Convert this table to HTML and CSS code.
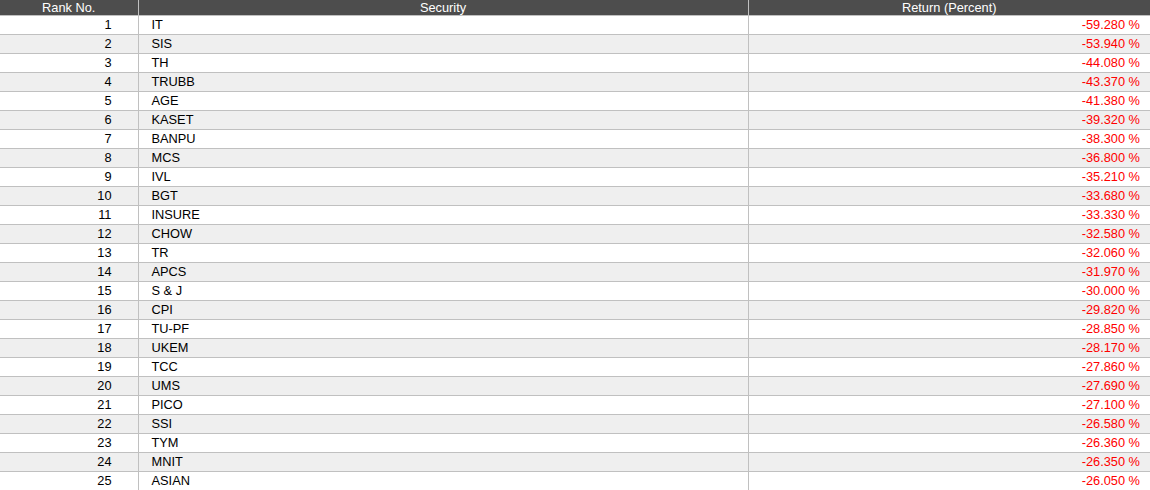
FILE: index.html
```html
<!DOCTYPE html>
<html>
<head>
<meta charset="utf-8">
<link rel="stylesheet" href="styles.css">
</head>
<body>
<table class="rank-table">
<colgroup><col class="c-rank"><col class="c-sec"><col class="c-ret"></colgroup>
<thead>
<tr><th>Rank No.</th><th>Security</th><th>Return (Percent)</th></tr>
</thead>
<tbody>
<tr><td class="rank">1</td><td class="sec">IT</td><td class="ret">-59.280 %</td></tr>
<tr><td class="rank">2</td><td class="sec">SIS</td><td class="ret">-53.940 %</td></tr>
<tr><td class="rank">3</td><td class="sec">TH</td><td class="ret">-44.080 %</td></tr>
<tr><td class="rank">4</td><td class="sec">TRUBB</td><td class="ret">-43.370 %</td></tr>
<tr><td class="rank">5</td><td class="sec">AGE</td><td class="ret">-41.380 %</td></tr>
<tr><td class="rank">6</td><td class="sec">KASET</td><td class="ret">-39.320 %</td></tr>
<tr><td class="rank">7</td><td class="sec">BANPU</td><td class="ret">-38.300 %</td></tr>
<tr><td class="rank">8</td><td class="sec">MCS</td><td class="ret">-36.800 %</td></tr>
<tr><td class="rank">9</td><td class="sec">IVL</td><td class="ret">-35.210 %</td></tr>
<tr><td class="rank">10</td><td class="sec">BGT</td><td class="ret">-33.680 %</td></tr>
<tr><td class="rank">11</td><td class="sec">INSURE</td><td class="ret">-33.330 %</td></tr>
<tr><td class="rank">12</td><td class="sec">CHOW</td><td class="ret">-32.580 %</td></tr>
<tr><td class="rank">13</td><td class="sec">TR</td><td class="ret">-32.060 %</td></tr>
<tr><td class="rank">14</td><td class="sec">APCS</td><td class="ret">-31.970 %</td></tr>
<tr><td class="rank">15</td><td class="sec">S &amp; J</td><td class="ret">-30.000 %</td></tr>
<tr><td class="rank">16</td><td class="sec">CPI</td><td class="ret">-29.820 %</td></tr>
<tr><td class="rank">17</td><td class="sec">TU-PF</td><td class="ret">-28.850 %</td></tr>
<tr><td class="rank">18</td><td class="sec">UKEM</td><td class="ret">-28.170 %</td></tr>
<tr><td class="rank">19</td><td class="sec">TCC</td><td class="ret">-27.860 %</td></tr>
<tr><td class="rank">20</td><td class="sec">UMS</td><td class="ret">-27.690 %</td></tr>
<tr><td class="rank">21</td><td class="sec">PICO</td><td class="ret">-27.100 %</td></tr>
<tr><td class="rank">22</td><td class="sec">SSI</td><td class="ret">-26.580 %</td></tr>
<tr><td class="rank">23</td><td class="sec">TYM</td><td class="ret">-26.360 %</td></tr>
<tr><td class="rank">24</td><td class="sec">MNIT</td><td class="ret">-26.350 %</td></tr>
<tr><td class="rank">25</td><td class="sec">ASIAN</td><td class="ret">-26.050 %</td></tr>
</tbody>
</table>
</body>
</html>
```

FILE: styles.css
```css
html, body {
  margin: 0;
  padding: 0;
  background: #ffffff;
}
body {
  font-family: "Liberation Sans", Arial, sans-serif;
  font-size: 12.8px;
  color: #000000;
}
.rank-table {
  width: 1150px;
  border-collapse: collapse;
  table-layout: fixed;
}
.c-rank { width: 138px; }
.c-sec { width: 610px; }
.c-ret { width: 402px; }
.rank-table th {
  background: #4d4d4d;
  color: #ffffff;
  font-weight: normal;
  font-size: 12.8px;
  height: 15px;
  line-height: 15px;
  padding: 0;
  text-align: center;
  border-left: 1px solid #c0c0c0;
  border-bottom: 1px solid #c0c0c0;
}
.rank-table th:first-child { border-left: none; }
.rank-table td {
  height: 18px;
  line-height: 18px;
  padding: 0;
  border-left: 1px solid #c0c0c0;
  border-bottom: 1px solid #c0c0c0;
  white-space: nowrap;
}
.rank-table td:first-child { border-left: none; }
.rank-table tbody tr:nth-child(even) td { background: #efefef; }
.rank { text-align: right; padding-right: 26px !important; }
.sec { text-align: left; padding-left: 13px !important; }
.ret { text-align: right; padding-right: 10px !important; color: #ff0000; }
```
